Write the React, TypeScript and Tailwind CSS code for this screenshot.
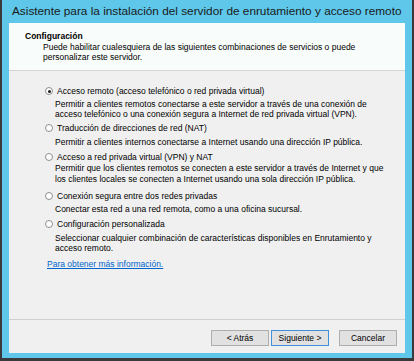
import type { ReactNode } from 'react';

const font = { fontFamily: '"Liberation Sans", Arial, sans-serif' };

function Radio({ checked, children, className = '' }: { checked?: boolean; children: ReactNode; className?: string }) {
  return (
    <div className={`flex items-center h-[10px] ${className}`}>
      <span className="ml-[36px] w-[8px] h-[8px] rounded-full border border-[#8f8f8f] bg-white flex items-center justify-center">
        {checked && <span className="w-[3px] h-[3px] rounded-full bg-[#1a1a1a]" />}
      </span>
      <span className="ml-[4px] leading-[10px]">{children}</span>
    </div>
  );
}

function Desc({ children, className = '' }: { children: ReactNode; className?: string }) {
  return <p className={`ml-[46px] leading-[10px] ${className}`}>{children}</p>;
}

function Button({ children, active }: { children: ReactNode; active?: boolean }) {
  return (
    <button
      className={`w-[58px] h-[16px] text-[8.5px] leading-none text-black border ${
        active ? 'border-[#3c8fd8] bg-[#e1e1e1]' : 'border-[#adadad] bg-[#e1e1e1]'
      }`}
    >
      {children}
    </button>
  );
}

export default function App() {
  return (
    <div className="w-[414px] h-[361px] bg-[#3a3a3a] pl-[2px] pr-[2px] pb-[3px]" style={font}>
      <div className="h-full bg-[#5ec7ea] flex flex-col px-[7px] pb-[5px]">
        {/* barra de título */}
        <div className="h-[23px] flex items-center pl-[3px] text-[11.8px] text-[#1a1a1a] whitespace-nowrap">
          Asistente para la instalación del servidor de enrutamiento y acceso remoto
        </div>

        <div className="flex-1 flex flex-col text-[8.5px] text-black">
          {/* cabecera */}
          <div className="h-[48px] bg-[#f8fcfa] border-b border-[#d5d5d5] pt-[8px]">
            <p className="ml-[16px] font-bold leading-[10px]">Configuración</p>
            <p className="ml-[34px] mt-[1px] leading-[10px]">
              Puede habilitar cualesquiera de las siguientes combinaciones de servicios o puede
              <br />
              personalizar este servidor.
            </p>
          </div>

          {/* opciones */}
          <div className="flex-1 bg-[#f0f0f0] pt-[15px]">
            <Radio checked>Acceso remoto (acceso telefónico o red privada virtual)</Radio>
            <Desc className="mt-[3px]">
              Permitir a clientes remotos conectarse a este servidor a través de una conexión de
              <br />
              acceso telefónico o una conexión segura a Internet de red privada virtual (VPN).
            </Desc>

            <Radio className="mt-[4px]">Traducción de direcciones de red (NAT)</Radio>
            <Desc className="mt-[4px]">Permitir a clientes internos conectarse a Internet usando una dirección IP pública.</Desc>

            <Radio className="mt-[5px]">Acceso a red privada virtual (VPN) y NAT</Radio>
            <Desc className="mt-[1px] !leading-[11px]">
              Permitir que los clientes remotos se conecten a este servidor a través de Internet y que
              <br />
              los clientes locales se conecten a Internet usando una sola dirección IP pública.
            </Desc>

            <Radio className="mt-[6px]">Conexión segura entre dos redes privadas</Radio>
            <Desc className="mt-[3px]">Conectar esta red a una red remota, como a una oficina sucursal.</Desc>

            <Radio className="mt-[5px]">Configuración personalizada</Radio>
            <Desc className="mt-[4px]">
              Seleccionar cualquier combinación de características disponibles en Enrutamiento y
              <br />
              acceso remoto.
            </Desc>

            <a className="block ml-[38px] mt-[6px] leading-[10px] text-[#0066cc] underline w-fit">
              Para obtener más información.
            </a>
          </div>

          {/* botones */}
          <div className="h-[34px] bg-[#f0f0f0] border-t border-[#d0d0d0] flex justify-end items-start pt-[10px] pr-[8px]">
            <div className="flex gap-[2px]">
              <Button>&lt; Atrás</Button>
              <Button active>Siguiente &gt;</Button>
            </div>
            <div className="ml-[10px]">
              <Button>Cancelar</Button>
            </div>
          </div>
        </div>
      </div>
    </div>
  );
}
